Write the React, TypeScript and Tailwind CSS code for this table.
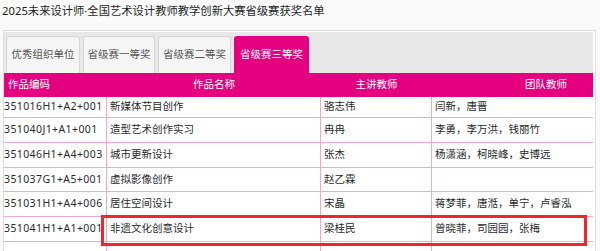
import React from "react";

const rows: { code: string; name: string; lead: string; team: string; h: string }[] = [
  { code: "351016H1+A2+001", name: "新媒体节目创作", lead: "骆志伟", team: "闫新，唐晋", h: "h-[21px]" },
  { code: "351040J1+A1+001", name: "造型艺术创作实习", lead: "冉冉", team: "李勇，李万洪，钱丽竹", h: "h-[25px]" },
  { code: "351046H1+A4+003", name: "城市更新设计", lead: "张杰", team: "杨潇涵，柯晓峰，史博远", h: "h-[25px]" },
  { code: "351037G1+A5+001", name: "虚拟影像创作", lead: "赵乙霖", team: "", h: "h-[24px]" },
  { code: "351031H1+A4+006", name: "居住空间设计", lead: "宋晶", team: "蒋梦菲，唐湉，单宁，卢睿泓", h: "h-[25px]" },
  { code: "351041H1+A1+001", name: "非遗文化创意设计", lead: "梁桂民", team: "曾晓菲，司园园，张梅", h: "h-[25px]" },
];

const font = "font-['Noto_Sans','Noto_Sans_CJK_SC',sans-serif]";

export default function App() {
  return (
    <div className={`relative w-[600px] h-[251px] overflow-hidden bg-[#fafafa] text-[10.5px] text-[#2a2a2a] ${font}`}>
      <div className="h-[30px] pl-[2px] pt-[4px] leading-[14px] text-[11.3px] text-[#1f1f1f] whitespace-nowrap">
        2025未来设计师·全国艺术设计教师教学创新大赛省级赛获奖名单
      </div>
      <div className="ml-[3px] w-[593px] border border-[#dedede] bg-white pt-[1px] pr-[2px]">
        <div className="bg-[#e8e8e8]">
          <div className="flex gap-[3px] pl-[2px] pt-[4px]">
            <div className="w-[74px] h-[37px] flex items-center justify-center rounded-t-[3px] border border-b-0 border-[#d6d6d6] bg-[#f5f5f5] text-[#555]">优秀组织单位</div>
            <div className="w-[72px] h-[37px] flex items-center justify-center rounded-t-[3px] border border-b-0 border-[#d6d6d6] bg-[#f5f5f5] text-[#555]">省级赛一等奖</div>
            <div className="w-[73px] h-[37px] flex items-center justify-center rounded-t-[3px] border border-b-0 border-[#d6d6d6] bg-[#f5f5f5] text-[#555]">省级赛二等奖</div>
            <div className="w-[75px] h-[37px] flex items-center justify-center rounded-t-[3px] bg-[#e4007f] text-white">省级赛三等奖</div>
          </div>
          <div className="flex h-[24px] items-center bg-[#e4007f] text-white">
            <div className="w-[103px] pl-[4px]">作品编码</div>
            <div className="w-[214px] text-center">作品名称</div>
            <div className="w-[111px] text-center">主讲教师</div>
            <div className="flex-1 pl-[93px]">团队教师</div>
          </div>
          <div className="bg-white">
            {rows.map((r) => (
              <div key={r.code} className={`flex ${r.h} border-b border-[#f5a6d0]`}>
                <div className="w-[103px] flex items-center pl-[0px] tracking-[0.4px] border-r border-[#f5a6d0] whitespace-nowrap overflow-hidden">{r.code}</div>
                <div className="w-[214px] flex items-center pl-[3px] border-r border-[#f5a6d0]">{r.name}</div>
                <div className="w-[111px] flex items-center pl-[3px] border-r border-[#f5a6d0]">{r.lead}</div>
                <div className="flex-1 flex items-center pl-[3px]">{r.team}</div>
              </div>
            ))}
            <div className="flex h-[24px]">
              <div className="w-[103px] border-r border-[#f5a6d0]" />
              <div className="w-[214px] border-r border-[#f5a6d0]" />
              <div className="w-[111px] border-r border-[#f5a6d0]" />
              <div className="flex-1" />
            </div>
          </div>
        </div>
      </div>
      <div className="absolute left-[101px] top-[215px] w-[486px] h-[31px] border-[3px] border-[#f0262b]" />
    </div>
  );
}
